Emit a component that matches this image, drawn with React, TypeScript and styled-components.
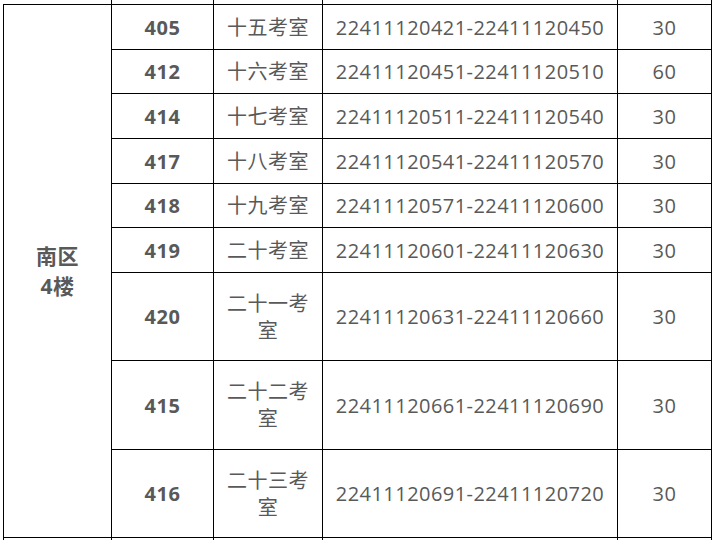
import React from "react";
import styled, { createGlobalStyle } from "styled-components";

const GlobalStyle = createGlobalStyle`
  html, body {
    margin: 0;
    padding: 0;
    background: #fff;
    overflow: hidden;
  }
  body {
    font-family: "Open Sans", "Noto Sans CJK SC", sans-serif;
  }
`;

const rows = [
  { room: "405", name: "十五考室", range: "22411120421-22411120450", count: "30", h: 45 },
  { room: "412", name: "十六考室", range: "22411120451-22411120510", count: "60", h: 44 },
  { room: "414", name: "十七考室", range: "22411120511-22411120540", count: "30", h: 45 },
  { room: "417", name: "十八考室", range: "22411120541-22411120570", count: "30", h: 45 },
  { room: "418", name: "十九考室", range: "22411120571-22411120600", count: "30", h: 44 },
  { room: "419", name: "二十考室", range: "22411120601-22411120630", count: "30", h: 45 },
  { room: "420", name: "二十一考室", range: "22411120631-22411120660", count: "30", h: 88 },
  { room: "415", name: "二十二考室", range: "22411120661-22411120690", count: "30", h: 89 },
  { room: "416", name: "二十三考室", range: "22411120691-22411120720", count: "30", h: 88 },
];

const Page = styled.div`
  height: 540px;
  overflow: hidden;
  padding-left: 3px;
`;

const Table = styled.table`
  border-collapse: collapse;
  table-layout: fixed;
  width: 708px;
  color: #595959;
  font-size: 20px;
  margin-top: -5px;
`;

const Cell = styled.td<{ $bold?: boolean }>`
  border: 1px solid #000;
  padding: 0 8px;
  text-align: center;
  vertical-align: middle;
  line-height: 27px;
  font-weight: ${(p) => (p.$bold ? 700 : 400)};
  letter-spacing: ${(p) => (p.$bold ? "0.6px" : "0.45px")};
`;

const AreaCell = styled(Cell)`
  font-size: 21px;
  line-height: 30px;
`;

const StubCell = styled.td<{ $blank?: boolean }>`
  height: 9px;
  padding: 0;
  border-left: ${(p) => (p.$blank ? "none" : "1px solid #000")};
  border-right: 1px solid #000;
`;

const TailCell = styled.td`
  height: 40px;
  padding: 0;
  border: 1px solid #000;
`;

export default function App() {
  return (
    <Page>
      <GlobalStyle />
      <Table>
        <colgroup>
          <col style={{ width: 108 }} />
          <col style={{ width: 102 }} />
          <col style={{ width: 109 }} />
          <col style={{ width: 295 }} />
          <col style={{ width: 94 }} />
        </colgroup>
        <tbody>
          <tr>
            <StubCell $blank />
            <StubCell />
            <StubCell />
            <StubCell />
            <StubCell />
          </tr>
          {rows.map((r, i) => (
            <tr key={r.room} style={{ height: r.h }}>
              {i === 0 && (
                <AreaCell $bold rowSpan={rows.length}>
                  南区
                  <br />
                  4楼
                </AreaCell>
              )}
              <Cell $bold>{r.room}</Cell>
              <Cell>{r.name}</Cell>
              <Cell>{r.range}</Cell>
              <Cell>{r.count}</Cell>
            </tr>
          ))}
          <tr>
            <TailCell />
            <TailCell />
            <TailCell />
            <TailCell />
            <TailCell />
          </tr>
        </tbody>
      </Table>
    </Page>
  );
}
